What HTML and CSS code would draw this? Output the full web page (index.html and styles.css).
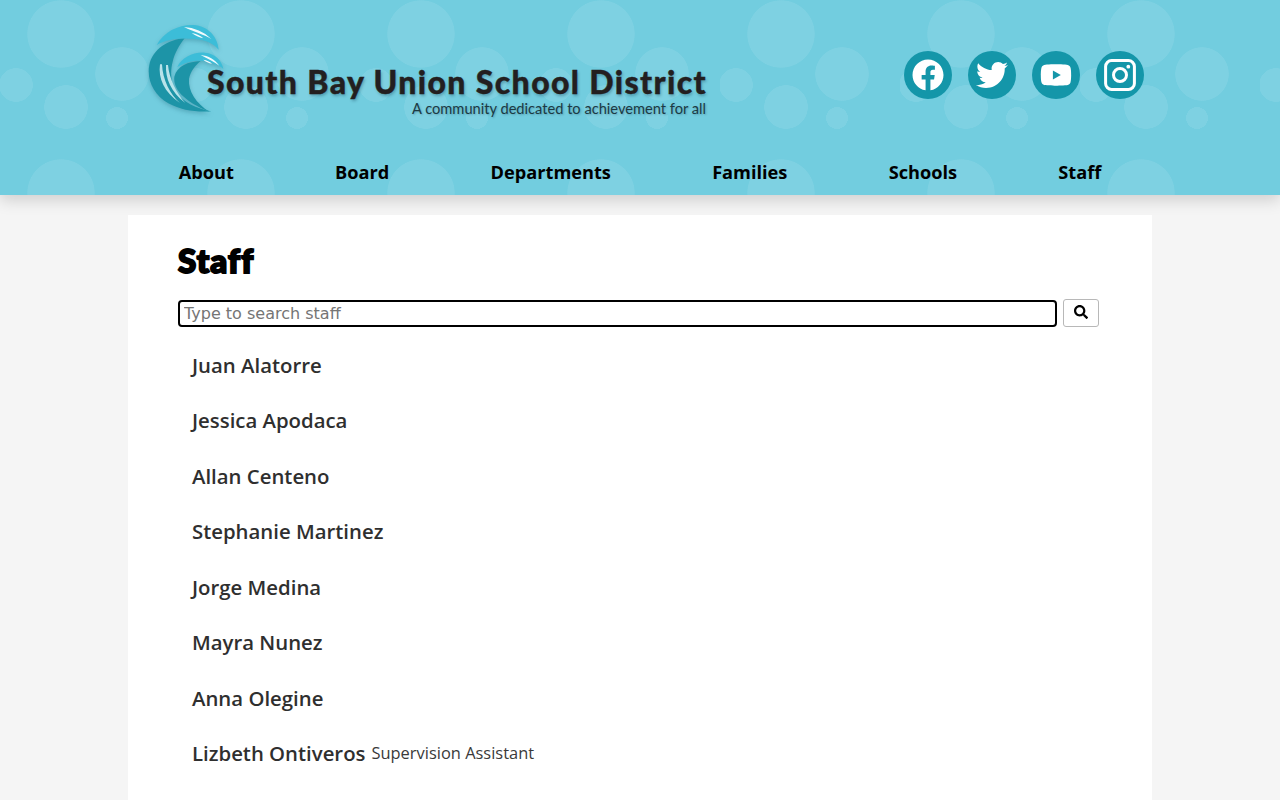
FILE: index.html
```html
<!DOCTYPE html>
<html lang="en">
<head>
<meta charset="utf-8">
<title>Staff - South Bay Union School District</title>
<link rel="stylesheet" href="styles.css">
</head>
<body>
<header class="site-header">
  <div class="header-inner">
    <div class="brand-row">
      <a class="logo" href="#">
        <svg class="wave" viewBox="0 0 300 315" aria-hidden="true">
          <path class="wave-dark" d="M134 70C85 74 38 102 28 150C19 195 42 240 85 265C125 287 170 292 214 289C170 282 128 260 108 232C92 206 90 170 98 140C104 115 118 90 134 70Z"/>
          <path class="wave-streak" d="M60 148C54 190 72 232 120 264C90 238 68 195 66 148ZM78 150C76 190 92 230 136 264C108 232 88 192 84 150Z"/>
          <path class="wave-light" d="M50 90C72 50 115 29 160 30C205 33 232 64 236 104C222 88 200 76 172 73C130 68 85 70 50 90Z"/>
          <path class="wave-foam" d="M132 36C162 38 192 50 214 72C196 60 160 50 132 36ZM155 54C170 56 182 62 190 70C178 67 165 62 155 54Z"/>
          <path class="wave-dark" d="M182 138C145 140 112 152 103 185C99 220 130 258 208 290C168 266 144 228 147 192C151 170 165 152 182 138Z"/>
          <path class="wave-light" d="M112 156C125 128 160 110 195 113C225 116 245 135 250 162C235 148 215 142 190 138C160 135 135 143 112 156Z"/>
          <path class="wave-foam" d="M182 120C205 122 225 134 238 152C222 140 200 130 182 120ZM190 134C200 135 210 140 216 146C206 144 197 140 190 134Z"/>
        </svg>
        <span class="logo-text">
          <span class="logo-name">South Bay Union School District</span>
          <span class="logo-tag">A community dedicated to achievement for all</span>
        </span>
      </a>
      <ul class="social">
        <li><a href="#" aria-label="Facebook"><svg viewBox="0 0 512 512"><path d="M504 256C504 119 393 8 256 8S8 119 8 256c0 123.78 90.69 226.38 209.25 245V327.69h-63V256h63v-54.64c0-62.15 37-96.48 93.67-96.48 27.14 0 55.52 4.84 55.52 4.84v61h-31.28c-30.8 0-40.41 19.12-40.41 38.73V256h68.78l-11 71.69h-57.78V501C413.31 482.38 504 379.78 504 256z"/></svg></a></li>
        <li><a href="#" aria-label="Twitter"><svg viewBox="0 0 512 512"><path d="M459.37 151.716c.325 4.548.325 9.097.325 13.645 0 138.72-105.583 298.558-298.558 298.558-59.452 0-114.68-17.219-161.137-47.106 8.447.974 16.568 1.299 25.34 1.299 49.055 0 94.213-16.568 130.274-44.832-46.132-.975-84.792-31.188-98.112-72.772 6.498.974 12.995 1.624 19.818 1.624 9.421 0 18.843-1.3 27.614-3.573-48.081-9.747-84.143-51.98-84.143-102.985v-1.299c13.969 7.797 30.214 12.67 47.431 13.319-28.264-18.843-46.781-51.005-46.781-87.391 0-19.492 5.197-37.36 14.294-52.954 51.655 63.675 129.3 105.258 216.365 109.807-1.624-7.797-2.599-15.918-2.599-24.04 0-57.828 46.782-104.934 104.934-104.934 30.213 0 57.502 12.67 76.67 33.137 23.715-4.548 46.456-13.32 66.599-25.34-7.798 24.366-24.366 44.833-46.132 57.827 21.117-2.273 41.584-8.122 60.426-16.243-14.292 20.791-32.161 39.308-52.628 54.253z"/></svg></a></li>
        <li><a href="#" aria-label="YouTube"><svg viewBox="0 0 576 512"><path d="M549.655 124.083c-6.281-23.65-24.787-42.276-48.284-48.597C458.781 64 288 64 288 64S117.22 64 74.629 75.486c-23.497 6.322-42.003 24.947-48.284 48.597-11.412 42.867-11.412 132.305-11.412 132.305s0 89.438 11.412 132.305c6.281 23.65 24.787 41.5 48.284 47.821C117.22 448 288 448 288 448s170.78 0 213.371-11.486c23.497-6.321 42.003-24.171 48.284-47.821 11.412-42.867 11.412-132.305 11.412-132.305s0-89.438-11.412-132.305zm-317.51 213.508V175.185l142.739 81.205-142.739 81.201z"/></svg></a></li>
        <li><a href="#" aria-label="Instagram"><svg viewBox="0 0 32 32"><rect class="ig-line" x="1.6" y="1.6" width="28.8" height="28.8" rx="6"/><circle class="ig-line" cx="16" cy="16" r="6.5"/><circle cx="24.3" cy="7.7" r="1.9"/></svg></a></li>
      </ul>
    </div>
    <nav class="main-nav">
      <a href="#">About</a>
      <a href="#">Board</a>
      <a href="#">Departments</a>
      <a href="#">Families</a>
      <a href="#">Schools</a>
      <a href="#">Staff</a>
    </nav>
  </div>
</header>
<main class="card">
  <h1 class="page-title">Staff</h1>
  <form class="search">
    <input class="search-input" type="text" placeholder="Type to search staff">
    <button class="search-btn" type="button" aria-label="Search">
      <svg viewBox="0 0 512 512"><path d="M505 442.7L405.3 343c-4.5-4.5-10.6-7-17-7H372c27.6-35.3 44-79.7 44-128C416 93.1 322.9 0 208 0S0 93.1 0 208s93.1 208 208 208c48.3 0 92.7-16.4 128-44v16.3c0 6.4 2.5 12.5 7 17l99.7 99.7c9.4 9.4 24.6 9.4 33.9 0l28.3-28.3c9.4-9.4 9.4-24.6.1-34zM208 336c-70.7 0-128-57.2-128-128 0-70.7 57.2-128 128-128 70.7 0 128 57.2 128 128 0 70.7-57.2 128-128 128z"/></svg>
    </button>
  </form>
  <ul class="staff-list">
    <li><span class="staff-name">Juan Alatorre</span></li>
    <li><span class="staff-name">Jessica Apodaca</span></li>
    <li><span class="staff-name">Allan Centeno</span></li>
    <li><span class="staff-name">Stephanie Martinez</span></li>
    <li><span class="staff-name">Jorge Medina</span></li>
    <li><span class="staff-name">Mayra Nunez</span></li>
    <li><span class="staff-name">Anna Olegine</span></li>
    <li><span class="staff-name">Lizbeth Ontiveros</span> <span class="staff-role">Supervision Assistant</span></li>
  </ul>
</main>
</body>
</html>
```
FILE: styles.css
```css
* { box-sizing: border-box; }

html, body {
  margin: 0;
  padding: 0;
}

body {
  background: #f5f5f5;
  font-family: "Open Sans", sans-serif;
  color: #333;
  min-height: 800px;
  overflow-x: hidden;
}

a { color: inherit; text-decoration: none; }

.site-header {
  --bubble: #7ed1e2;
  height: 195px;
  background-color: #72cddf;
  background-image:
    radial-gradient(circle 34px at 61px 34px, var(--bubble) 98%, transparent 100%),
    radial-gradient(circle 27px at 122px 74px, var(--bubble) 98%, transparent 100%),
    radial-gradient(circle 17px at 16px 85px, var(--bubble) 98%, transparent 100%),
    radial-gradient(circle 22px at 66px 107px, var(--bubble) 98%, transparent 100%),
    radial-gradient(circle 11px at 117px 118px, var(--bubble) 98%, transparent 100%);
  background-size: 180px 159px;
  box-shadow: 0 5px 15px rgba(0, 0, 0, 0.16);
}

.header-inner {
  width: 1024px;
  margin: 0 auto;
}

.brand-row {
  height: 148px;
  display: flex;
  justify-content: space-between;
  align-items: flex-start;
}

.logo {
  position: relative;
  display: block;
  width: 590px;
  height: 130px;
  margin-left: 12px;
}

.wave {
  position: absolute;
  left: 0;
  top: 15px;
  width: 100px;
  height: 105px;
  filter: drop-shadow(0 2px 2px rgba(20, 90, 110, 0.3));
}

.wave-dark { fill: #1d94a7; }
.wave-light { fill: #3cbdd8; }
.wave-foam { fill: #f2fbfd; }
.wave-streak { fill: #b7e3ea; }

.logo-text {
  position: absolute;
  left: 67px;
  top: 63px;
  width: 499px;
  display: flex;
  flex-direction: column;
  align-items: flex-end;
  font-family: "Lato", sans-serif;
  color: #231f20;
}

.logo-name {
  font-size: 32px;
  line-height: 38px;
  font-weight: 900;
  letter-spacing: 1.38px;
  margin-right: -1px;
  white-space: nowrap;
  -webkit-text-stroke: 0.4px #231f20;
  text-shadow: 1px 2px 3px rgba(0, 40, 60, 0.3);
}

.logo-tag {
  font-size: 14.65px;
  line-height: 18px;
  margin-top: -1px;
  white-space: nowrap;
  color: #1c3a44;
  text-shadow: 1px 1px 2px rgba(0, 40, 60, 0.25);
}

.social {
  list-style: none;
  margin: 51px 8px 0 0;
  padding: 0;
  display: flex;
  gap: 16px;
}

.social a {
  display: flex;
  align-items: center;
  justify-content: center;
  width: 48px;
  height: 48px;
  border-radius: 50%;
  background: #1496a9;
}

.social svg {
  width: 32px;
  height: 32px;
  fill: #fff;
}

.ig-line {
  fill: none;
  stroke: #fff;
  stroke-width: 3;
}

.main-nav {
  height: 47px;
  display: flex;
  justify-content: space-around;
  align-items: center;
  font-size: 18.2px;
  font-weight: 700;
  color: #000;
}

.card {
  width: 1024px;
  margin: 20px auto 0;
  padding: 23px 50px 40px;
  background: #fff;
  height: 640px;
}

.page-title {
  margin: 0;
  font-family: "Lato", sans-serif;
  font-weight: 900;
  font-size: 33px;
  line-height: 44px;
  letter-spacing: 1.2px;
  color: #000;
  -webkit-text-stroke: 2px #000;
  text-shadow: -1px 0 0 rgba(180, 110, 30, 0.3), 1px 0 0 rgba(30, 90, 180, 0.3);
}

.search {
  display: flex;
  align-items: flex-end;
  gap: 6px;
  margin-top: 17px;
  width: 921px;
}

.search-input {
  width: 879px;
  height: 27px;
  padding: 1px 4px;
  border: 2px solid #000;
  border-radius: 4px;
  background: #fff;
  font-family: "DejaVu Sans", sans-serif;
  font-size: 16px;
  outline: none;
}

.search-input::placeholder { color: #757575; opacity: 1; }

.search-btn {
  width: 36px;
  height: 28px;
  padding: 0 0 2px;
  display: flex;
  align-items: center;
  justify-content: center;
  background: #fff;
  border: 1px solid #b8b8b8;
  border-radius: 3px;
}

.search-btn svg {
  width: 14px;
  height: 14px;
  fill: #000;
}

.staff-list {
  list-style: none;
  margin: 10px 0 0;
  padding: 0 14px;
}

.staff-list li {
  height: 55.5px;
  display: flex;
  align-items: center;
  gap: 6px;
}

.staff-name {
  font-size: 20.35px;
  font-weight: 600;
  color: #2f2f2f;
}

.staff-role {
  font-size: 16.45px;
  margin-bottom: 2px;
  color: #3a3a3a;
}
```
